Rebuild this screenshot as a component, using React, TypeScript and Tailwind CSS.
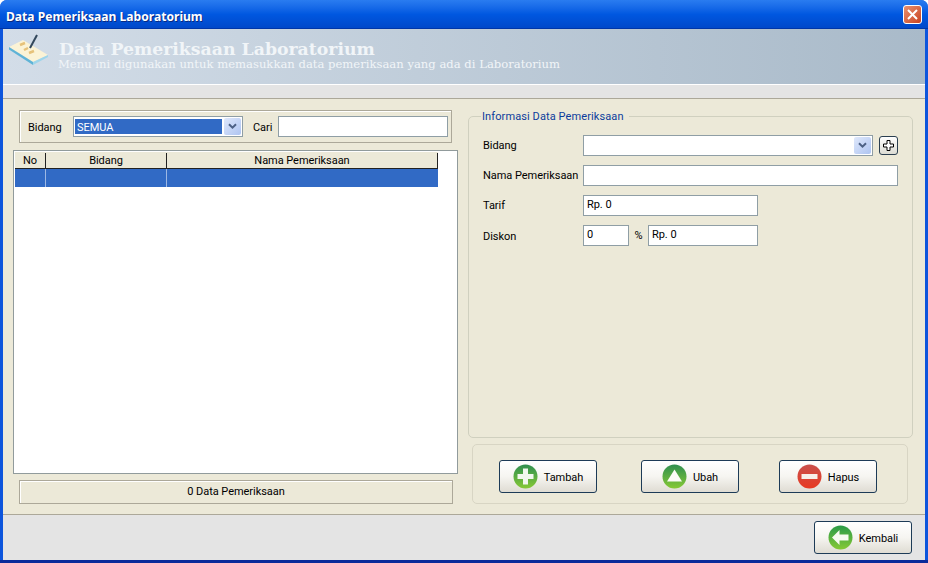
import { useId } from 'react'

const uiFont = "font-['Roboto',Arial,sans-serif] text-[11px] tracking-[-0.05px] text-black"

function ChevronBox() {
  return (
    <div className="flex h-[17px] w-[17px] shrink-0 items-center justify-center rounded-[2px] bg-gradient-to-br from-[#dfe8fb] to-[#aec4f1]">
      <svg width="9" height="7" viewBox="0 0 9 7">
        <path d="M1 1.2 L4.5 4.7 L8 1.2" fill="none" stroke="#4d6185" strokeWidth="2" />
      </svg>
    </div>
  )
}

function RoundIcon({ kind }: { kind: 'plus' | 'up' | 'minus' | 'back' }) {
  const id = useId()
  const red = kind === 'minus'
  const top = red ? '#c9504c' : kind === 'back' ? '#2a9a48' : '#2f8f4f'
  const bottom = red ? '#e83a22' : '#86c935'
  return (
    <svg width="25" height="25" viewBox="0 0 25 25" className="shrink-0">
      <defs>
        <linearGradient id={id} x1="0" y1="0" x2="0" y2="1">
          <stop offset="0" stopColor={top} />
          <stop offset="1" stopColor={bottom} />
        </linearGradient>
      </defs>
      <circle cx="12.5" cy="12.5" r="12" fill={`url(#${id})`} />
      {kind === 'plus' && <path d="M10 4.500h5v5.500h5.500v5H15v5.500h-5V15H4.500v-5H10z" fill="#f2f7ee" />}
      {kind === 'up' && <path d="M12.500 5.500 L20 17.500 H5z" fill="#fbfbf6" />}
      {kind === 'minus' && <rect x="4.500" y="10" width="16" height="5" fill="#f7efea" />}
      {kind === 'back' && <path d="M11.500 5 L4 12.500 L11.500 20 V15.500 H20.500 V9.500 H11.500z" fill="#f7faf0" />}
    </svg>
  )
}

function ActionButton({ label, kind, className }: { label: string; kind: 'plus' | 'up' | 'minus' | 'back'; className?: string }) {
  return (
    <button className={`flex h-[33px] w-[98px] items-center justify-center gap-[6px] rounded-[3px] border border-[#1d3b57] bg-gradient-to-b from-white via-[#f6f5f1] to-[#dfdcd3] ${className ?? ''}`}>
      <RoundIcon kind={kind} />
      <span className="pt-[3px]">{label}</span>
    </button>
  )
}

function TextField({ value, className }: { value?: string; className: string }) {
  return (
    <div className={`flex items-center border border-[#8f9ea5] bg-white pl-[3px] ${className}`}>
      {value}
    </div>
  )
}

export default function App() {
  return (
    <div className={`flex h-[563px] w-[928px] flex-col overflow-hidden rounded-t-[7px] border-b-[3px] border-b-[#0a2a9a] bg-[#0d55dc] ${uiFont}`}>
      {/* title bar */}
      <div className="flex h-[29px] shrink-0 items-center justify-between bg-gradient-to-b from-[#2a7cf0] via-[#0057e0] to-[#0047c8] pl-[6px] pr-[6px] shadow-[inset_0_-1px_0_#0036a8]">
        <span className="pt-[6px] font-['Noto_Sans',Arial,sans-serif] text-[12.100px] font-bold tracking-normal text-white [text-shadow:1px_1px_0_#0a2a80]">
          Data Pemeriksaan Laboratorium
        </span>
        <div className="flex h-[19px] w-[19px] items-center justify-center rounded-[3px] border border-white bg-gradient-to-br from-[#e8906f] to-[#c8401c]">
          <svg width="11" height="11" viewBox="0 0 11 11">
            <path d="M1 1 L10 10 M10 1 L1 10" stroke="white" strokeWidth="2" />
          </svg>
        </div>
      </div>

      <div className="ml-[3px] mr-[3px] flex flex-1 flex-col bg-[#e4e4e4]">
        {/* header banner */}
        <div className="flex h-[55px] shrink-0 bg-gradient-to-r from-[#d3dde8] to-[#a9bac9]">
          <svg width="56" height="40" viewBox="0 0 56 40" className="shrink-0">
            <path d="M6 18 L20 11 L45 26 L30 33z" fill="#fbf3d6" />
            <path d="M6 18 L30 33 L30 36 L6 20.500z" fill="#5fb3d6" />
            <path d="M30 33 L45 26 L45 28 L30 36z" fill="#9ed5ea" />
            <path d="M17 16 L22 14 M26 24 L31 22 M21 21 L25 19" stroke="#e6c27a" strokeWidth="2.500" />
            <path d="M27 19 L34 6" stroke="#33485c" strokeWidth="2" />
          </svg>
          <div className="flex flex-col pt-[12px] font-['DejaVu_Serif',serif] tracking-normal text-[#f1f5f8]">
            <span className="text-[17.300px] leading-[16px] font-bold">Data Pemeriksaan Laboratorium</span>
            <span className="-ml-px text-[11.600px] leading-[14px]">Menu ini digunakan untuk memasukkan data pemeriksaan yang ada di Laboratorium</span>
          </div>
        </div>

        {/* band under banner */}
        <div className="h-[15px] shrink-0 border-t border-white border-b border-b-[#aca899]" />

        {/* content */}
        <div className="flex h-[416px] shrink-0 gap-[10px] border-b border-[#aca899] bg-[#ece9d8] pl-[10px]">
          {/* left column */}
          <div className="flex w-[445px] flex-col pt-[11px]">
            <div className="mx-[6px] flex h-[33px] items-center border border-[#aca899] pl-[8px] shadow-[inset_1px_1px_0_#fff]">
              <span className="w-[45px] pt-[4px]">Bidang</span>
              <div className="flex h-[21px] w-[170px] items-center border border-[#8f9ea5] bg-white p-[1px]">
                <div className="mr-[2px] flex h-[15px] flex-1 items-center bg-[#316ac5] pl-[2px] pt-[4px] text-white">SEMUA</div>
                <ChevronBox />
              </div>
              <span className="ml-[10px] w-[25px] pt-[4px]">Cari</span>
              <TextField className="h-[21px] w-[170px]" />
            </div>

            <div className="mt-[7px] h-[324px] border border-[#919b9c] bg-white p-px">
              <div className="flex h-[17px] w-[423px] border-b border-b-[#222] bg-[#ece9d8] pt-px text-center">
                <div className="w-[31px] border-r border-[#222]">No</div>
                <div className="w-[121px] border-r border-[#222]">Bidang</div>
                <div className="flex-1 border-r border-[#222]">Nama Pemeriksaan</div>
              </div>
              <div className="flex h-[18px] w-[423px] bg-[#316ac5]">
                <div className="w-[31px] border-r border-[#9db8e4]" />
                <div className="w-[121px] border-r border-[#9db8e4]" />
              </div>
            </div>

            <div className="ml-[6px] mr-[5px] mt-[6px] flex h-[24px] items-center justify-center border border-[#aca899] shadow-[inset_1px_1px_0_#fff]">
              0 Data Pemeriksaan
            </div>
          </div>

          {/* right column */}
          <div className="flex w-[445px] flex-col">
            <fieldset className="mt-[8px] h-[331px] rounded-[5px] border border-[#d0d0bf] pl-[14px]">
              <legend className="ml-[-2px] px-[1px] pr-[5px] pt-[2px] tracking-[0.1px] text-[#0b3c9c]">Informasi Data Pemeriksaan</legend>
              <div className="flex flex-col gap-[9px] pt-[9px]">
                <div className="flex h-[21px] items-center">
                  <span className="w-[100px] pt-[2px]">Bidang</span>
                  <div className="flex h-[21px] w-[290px] items-center justify-end border border-[#8f9ea5] bg-white p-[1px]">
                    <ChevronBox />
                  </div>
                  <div className="ml-[6px] flex h-[19px] w-[19px] items-center justify-center rounded-[3px] border border-[#2b3f50] bg-gradient-to-b from-white to-[#dcdcd4]">
                    <svg width="11" height="11" viewBox="0 0 11 11">
                      <path d="M4 .5h3v3.500h3.500v3H7v3.500H4V7H.5V4H4z" fill="white" stroke="black" />
                    </svg>
                  </div>
                </div>
                <div className="flex h-[21px] items-center">
                  <span className="w-[100px] whitespace-nowrap pt-[2px]">Nama Pemeriksaan</span>
                  <TextField className="h-[21px] w-[315px]" />
                </div>
                <div className="flex h-[21px] items-center">
                  <span className="w-[100px] pt-[2px]">Tarif</span>
                  <TextField className="h-[21px] w-[175px]" value="Rp. 0" />
                </div>
                <div className="flex h-[21px] items-center">
                  <span className="w-[100px] pt-[4px]">Diskon</span>
                  <TextField className="h-[21px] w-[46px]" value="0" />
                  <span className="w-[19px] pt-[2px] text-center">%</span>
                  <TextField className="h-[21px] w-[110px]" value="Rp. 0" />
                </div>
              </div>
            </fieldset>

            <div className="ml-[4px] mt-[6px] flex h-[60px] w-[436px] items-center rounded-[5px] border border-[#d8d5c4] pt-[5px]">
              <ActionButton label="Tambah" kind="plus" className="ml-[26px]" />
              <ActionButton label="Ubah" kind="up" className="ml-[44px]" />
              <ActionButton label="Hapus" kind="minus" className="ml-[40px]" />
            </div>
          </div>
        </div>

        {/* footer */}
        <div className="flex flex-1 justify-end pr-[13px] pt-[6px]">
          <ActionButton label="Kembali" kind="back" />
        </div>
      </div>
    </div>
  )
}
